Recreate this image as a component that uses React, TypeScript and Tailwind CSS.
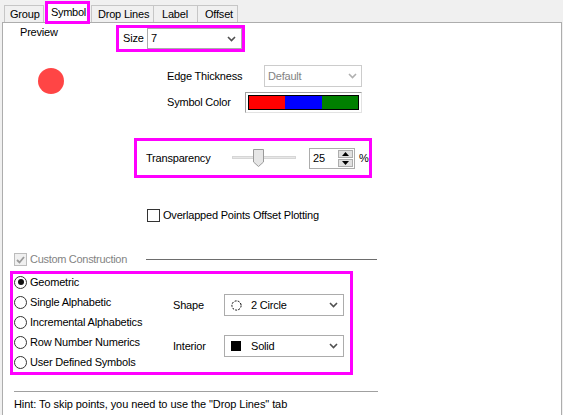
import React from "react";

const Chevron = ({ color = "#505050" }: { color?: string }) => (
  <svg width="9" height="6" viewBox="0 0 9 6" className="shrink-0">
    <path d="M1 1 L4.5 4.5 L8 1" fill="none" stroke={color} strokeWidth="1.6" />
  </svg>
);

const Radio = ({ checked, label }: { checked?: boolean; label: string }) => (
  <div className="flex h-[16px] items-center">
    <div className="flex h-[13px] w-[13px] items-center justify-center rounded-full border border-[#333333] bg-white">
      {checked && <div className="h-[6px] w-[6px] rounded-full bg-[#111111]" />}
    </div>
    <span className="ml-[3px]">{label}</span>
  </div>
);

export default function App() {
  return (
    <div
      className="relative h-[415px] w-[563px] overflow-hidden bg-[#f0f0f0] text-[11px] leading-[13px] tracking-[-0.2px] text-black"
      style={{ fontFamily: '"Liberation Sans", Arial, sans-serif' }}
    >
      {/* Tabs */}
      <div className="flex h-[22px] items-end pl-[4px]">
        <div className="flex h-[17px] w-[40px] items-center border border-b-0 border-[#c6c6c6] bg-[#f0f0f0] pl-[5px]">Group</div>
        <div className="relative z-10 mb-[-2px] ml-[1px] flex h-[23px] w-[45px] items-center whitespace-nowrap border-[3px] border-[#ff00ff] bg-white pl-[3px] tracking-[-0.3px]">Symbol</div>
        <div className="ml-[1px] flex h-[17px] w-[63px] items-center border border-b-0 border-[#c6c6c6] bg-[#f0f0f0] pl-[6px]">Drop Lines</div>
        <div className="-ml-px flex h-[17px] w-[45px] items-center border border-b-0 border-[#c6c6c6] bg-[#f0f0f0] pl-[8px]">Label</div>
        <div className="-ml-px flex h-[17px] w-[41px] items-center border border-b-0 border-[#c6c6c6] bg-[#f0f0f0] pl-[7px]">Offset</div>
      </div>

      {/* Panel */}
      <div className="ml-[2px] h-[400px] w-[560px] border border-[#adadad] bg-white">
        {/* Row: Preview + Size */}
        <div className="mt-[2px] flex h-[27px]">
          <div className="w-[113px] pl-[17px] pt-[1px]">Preview</div>
          <div className="flex h-[27px] w-[129px] items-center border-[3px] border-[#ff00ff] pl-[4px]">
            <span className="w-[24px]">Size</span>
            <div className="flex h-[21px] w-[95px] items-center justify-between border border-[#acacac] bg-white pl-[3px] pr-[5px]">
              <span>7</span>
              <Chevron />
            </div>
          </div>
        </div>

        {/* Row: circle + edge/color */}
        <div className="flex h-[86px]">
          <div className="w-[164px] pl-[35px] pt-[16px]">
            <div className="h-[26px] w-[26px] rounded-full bg-[#ff4545]" />
          </div>
          <div className="flex flex-col pt-[13px]">
            <div className="flex h-[22px] items-center">
              <span className="w-[97px]">Edge Thickness</span>
              <div className="flex h-[22px] w-[98px] items-center justify-between border border-[#cccccc] bg-white pl-[3px] pr-[4px] text-[#838383]">
                <span>Default</span>
                <Chevron color="#b0b0b0" />
              </div>
            </div>
            <div className="mt-[5px] flex h-[21px] items-center">
              <span className="w-[78px]">Symbol Color</span>
              <div className="h-[21px] w-[117px] border border-[#a0a0a0] border-b-[#e3e3e3] border-r-[#e3e3e3] p-[2px]">
                <div className="flex h-full w-full border border-black">
                  <div className="flex-1 bg-[#ff0000]" />
                  <div className="flex-1 bg-[#0000ff]" />
                  <div className="flex-1 bg-[#008000]" />
                </div>
              </div>
            </div>
          </div>
        </div>

        {/* Transparency */}
        <div className="ml-[131px] flex h-[40px] w-[238px] items-center border-[3px] border-[#ff00ff] pl-[9px]">
          <span className="w-[86px]">Transparency</span>
          <div className="relative h-[18px] w-[64px]">
            <div className="absolute left-0 right-0 top-[7px] h-[3px] border border-[#d6d6d6] bg-[#e7e7e7]" />
            <svg width="11" height="18" viewBox="0 0 11 18" className="absolute left-[21px] top-0">
              <path d="M0.5 0.5 H10.5 V13 L5.5 17.5 L0.5 13 Z" fill="#e6e6e6" stroke="#9a9a9a" />
            </svg>
          </div>
          <div className="ml-[13px] flex h-[21px] w-[46px] border border-[#acacac] bg-white">
            <span className="flex-1 pl-[3px] pt-[3px]">25</span>
            <div className="flex w-[16px] flex-col gap-px py-px pr-px">
              <div className="flex flex-1 items-center justify-center border border-[#adadad] bg-[#e1e1e1]">
                <svg width="7" height="4" viewBox="0 0 7 4"><path d="M0 4 L3.5 0 L7 4 Z" fill="#000" /></svg>
              </div>
              <div className="flex flex-1 items-center justify-center border border-[#adadad] bg-[#e1e1e1]">
                <svg width="7" height="4" viewBox="0 0 7 4"><path d="M0 0 L3.5 4 L7 0 Z" fill="#000" /></svg>
              </div>
            </div>
          </div>
          <span className="ml-[4px]">%</span>
        </div>

        {/* Overlapped checkbox */}
        <div className="ml-[144px] mt-[31px] flex h-[13px] items-center">
          <div className="h-[13px] w-[13px] border border-[#333333] bg-white" />
          <span className="ml-[3px]">Overlapped Points Offset Plotting</span>
        </div>

        {/* Custom Construction */}
        <div className="ml-[11px] mt-[31px] flex h-[13px] items-center">
          <div className="flex h-[13px] w-[13px] items-center justify-center border border-[#bcbcbc] bg-[#f0f0f0]">
            <svg width="9" height="8" viewBox="0 0 9 8"><path d="M1 4 L3.5 6.5 L8 1" fill="none" stroke="#9a9a9a" strokeWidth="1.8" /></svg>
          </div>
          <span className="ml-[3px] w-[115px] whitespace-nowrap tracking-[-0.3px] text-[#838383]">Custom Construction</span>
          <div className="ml-px h-px w-[231px] bg-[#6d6d6d]" />
        </div>

        {/* Magenta group */}
        <div className="ml-[7px] mt-[5px] flex h-[104px] w-[343px] border-[3px] border-[#ff00ff]">
          <div className="flex w-[160px] flex-col gap-[4px] pl-px pt-0">
            <Radio checked label="Geometric" />
            <Radio label="Single Alphabetic" />
            <Radio label="Incremental Alphabetics" />
            <Radio label="Row Number Numerics" />
            <Radio label="User Defined Symbols" />
          </div>
          <div className="flex flex-col pt-[20px]">
            <div className="flex h-[22px] items-center">
              <span className="w-[51px]">Shape</span>
              <div className="flex h-[22px] w-[120px] items-center justify-between border border-[#acacac] bg-white pl-[6px] pr-[5px]">
                <div className="flex items-center">
                  <svg width="11" height="11" viewBox="0 0 11 11">
                    <circle cx="5.5" cy="5.5" r="4.6" fill="none" stroke="#000" strokeWidth="1" strokeDasharray="2 1.2" />
                  </svg>
                  <span className="ml-[9px]">2 Circle</span>
                </div>
                <Chevron />
              </div>
            </div>
            <div className="mt-[19px] flex h-[22px] items-center">
              <span className="w-[51px]">Interior</span>
              <div className="flex h-[22px] w-[120px] items-center justify-between border border-[#acacac] bg-white pl-[6px] pr-[5px]">
                <div className="flex items-center">
                  <div className="h-[10px] w-[10px] bg-black" />
                  <span className="ml-[10px]">Solid</span>
                </div>
                <Chevron />
              </div>
            </div>
          </div>
        </div>

        {/* Separator + hint */}
        <div className="ml-[11px] mt-[16px] h-px w-[364px] bg-[#a0a0a0]" />
        <div className="ml-[11px] mt-[6px] tracking-[-0.07px]">Hint: To skip points, you need to use the "Drop Lines" tab</div>
      </div>
    </div>
  );
}
